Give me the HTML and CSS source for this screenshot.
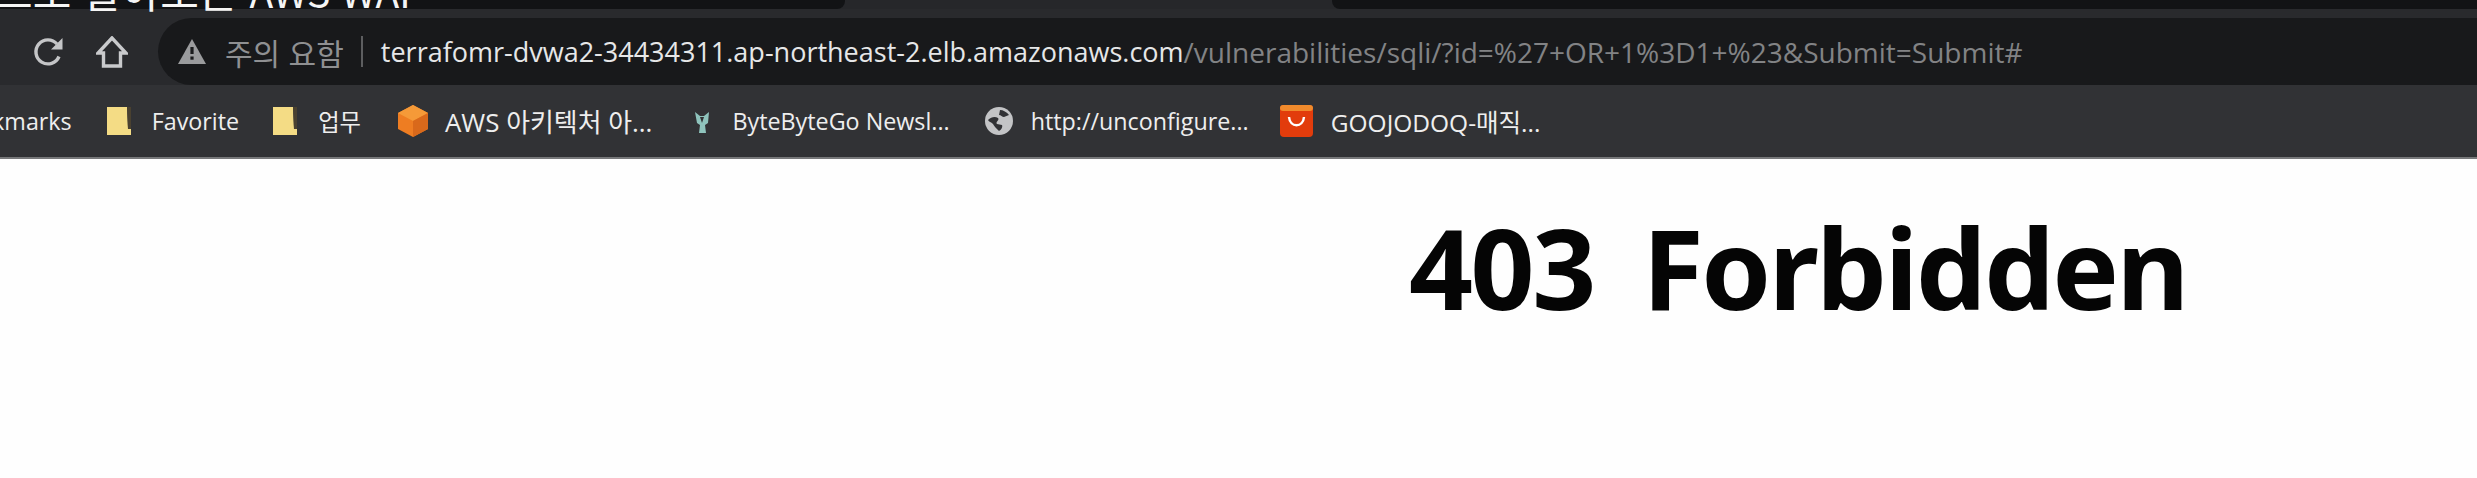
FILE: index.html
```html
<!DOCTYPE html>
<html lang="ko">
<head>
  <meta charset="UTF-8">
  <title>403 Forbidden</title>
  <link rel="stylesheet" href="styles.css">
</head>
<body>

  <!-- Video subtitle, cut off by the top edge -->
  <div class="subtitle">으로 알아보는 <span class="subtitle-latin">AWS WAF</span></div>

  <!-- Tab strip -->
  <div class="tabstrip">
    <div class="tab tab-left"></div>
    <div class="tab-gap"></div>
    <div class="tab tab-right"></div>
  </div>

  <!-- Toolbar -->
  <div class="toolbar">
    <svg class="tool-icon reload" viewBox="0 0 30 30" fill="none" stroke="#c4c5c7" stroke-width="3.4">
      <path d="M26 19.5a12 12 0 1 1-2-12.5"/>
      <path d="M29.5 1v11.500H18z" fill="#c4c5c7" stroke="none"/>
    </svg>
    <svg class="tool-icon home" viewBox="0 0 32 32" fill="none" stroke="#c9cacc" stroke-width="3.400">
      <path d="M16 2 2 17h5.500v13h17V17H30z"/>
    </svg>
    <div class="omnibox">
      <svg class="warn" viewBox="0 0 28 25">
        <path d="M14 0 28 25H0z" fill="#9a9b9d"/>
        <rect x="12.400" y="8" width="3.200" height="7" fill="#1a1b1d"/>
        <rect x="12.400" y="17.500" width="3.200" height="3.200" fill="#1a1b1d"/>
      </svg>
      <span class="warn-text">주의 요함</span>
      <span class="divider"></span>
      <span class="url-host">terrafomr-dvwa2-34434311.ap-northeast-2.elb.amazonaws.com</span><span class="url-path">/vulnerabilities/sqli/?id=%27+OR+1%3D1+%23&amp;Submit=Submit#</span>
    </div>
  </div>

  <!-- Bookmarks bar -->
  <div class="bookmarks">
    <span class="bm bm-clipped">Bookmarks</span>

    <div class="bm bm-favorite">
      <svg class="folder" viewBox="0 0 24 28">
        <path d="M0 0h20l1 22h3v6H0z" fill="#f4dc85"/>
        <path d="M20 0h4v22h-3z" fill="#4a4130"/>
      </svg>
      <span>Favorite</span>
    </div>

    <div class="bm bm-work">
      <svg class="folder" viewBox="0 0 24 28">
        <path d="M0 0h20l1 22h3v6H0z" fill="#f4dc85"/>
        <path d="M20 0h4v22h-3z" fill="#4a4130"/>
      </svg>
      <span>업무</span>
    </div>

    <div class="bm bm-aws">
      <svg class="favicon-aws" viewBox="0 0 30 32">
        <path d="M15 0 30 8v16l-15 8-15-8V8z" fill="#ee7d22"/>
        <path d="M15 0 30 8 15 16 0 8z" fill="#f59a38"/>
        <path d="M15 16 30 8v16l-15 8z" fill="#d9691b"/>
      </svg>
      <span class="label-aws">AWS 아키텍처 아...</span>
    </div>

    <div class="bm bm-bytebyte">
      <svg class="favicon-byte" viewBox="0 0 14 24">
        <path d="M0 3 5 7h4l5-4-1 11-3 2 1 8H4l1-8-3-2z" fill="#8fc4bd"/>
        <path d="M5 8h4L7 14z" fill="#313235"/>
      </svg>
      <span>ByteByteGo Newsl...</span>
    </div>

    <div class="bm bm-http">
      <svg class="favicon-globe" viewBox="0 0 28 28">
        <circle cx="14" cy="14" r="14" fill="#c3c4c6"/>
        <path d="M3 13c3-3 7-4 10-2 2 2-3 4-1 6l5 1c1 2-1 5-3 6-3-3-5-5-6-7-2-2-4-2-5-4zM15 3c3 0 7 2 9 5l-5 2c-2 0-3-2-5-2z" fill="#313235"/>
      </svg>
      <span>http://unconfigure...</span>
    </div>

    <div class="bm bm-goojo">
      <svg class="favicon-red" viewBox="0 0 33 32">
        <rect width="33" height="32" rx="4" fill="#e23c0c"/>
        <rect width="33" height="6" rx="3" fill="#f08a2c"/>
        <path d="M9 12c1 11 14 11 15 0" fill="none" stroke="#fff" stroke-width="2.500"/>
      </svg>
      <span class="label-goojo">GOOJODOQ-매직...</span>
    </div>
  </div>

  <!-- Page content -->
  <div class="content">
    <h1>403 Forbidden</h1>
  </div>

</body>
</html>
```

FILE: styles.css
```css
body {
  font-family: "Open Sans", "Noto Sans CJK KR", sans-serif;
  margin: 0;
  padding: 0;
  height: 478px;
  overflow: hidden;
  background-color: #fefefe;
}

.subtitle {
  position: absolute;
  top: -38px;
  left: -6px;
  font-family: "Noto Sans CJK KR", sans-serif;
  font-size: 42px;
  line-height: 56px;
  color: #f5f5f5;
  white-space: nowrap;
}
.subtitle-latin {
  font-size: 39px;
}

.tabstrip {
  display: flex;
  height: 9px;
  background-color: #26272a;
}
.tab {
  background-color: #121315;
}
.tab-left {
  width: 845px;
  border-bottom-right-radius: 8px;
}
.tab-gap {
  flex: 1;
}
.tab-right {
  width: 1145px;
  border-bottom-left-radius: 8px;
}

.toolbar {
  display: flex;
  align-items: center;
  height: 76px;
  background-color: #292a2d;
}
.tool-icon {
  flex-shrink: 0;
  margin-top: 10px;
}
.reload {
  width: 30px;
  height: 30px;
  margin-left: 33px;
}
.home {
  width: 32px;
  height: 32px;
  margin-left: 33px;
}

.omnibox {
  flex: 1;
  height: 67px;
  margin-left: 30px;
  margin-top: 9px;
  display: flex;
  align-items: center;
  background-color: #18191b;
  border-radius: 34px 0 0 34px;
  white-space: nowrap;
  font-size: 27px;
}
.warn {
  width: 28px;
  height: 25px;
  margin-left: 20px;
}
.warn-text {
  margin-left: 19px;
  font-family: "Noto Sans CJK KR", sans-serif;
  font-size: 30px;
  color: #8f9092;
}
.divider {
  width: 2px;
  height: 31px;
  margin-left: 17px;
  background-color: #5d5e60;
}
.url-host {
  margin-left: 18px;
  color: #e6e7e8;
}
.url-path {
  font-size: 28px;
  color: #828385;
}

.bookmarks {
  display: flex;
  align-items: center;
  height: 74px;
  overflow: hidden;
  box-sizing: border-box;
  border-bottom: 2px solid #77787a;
  background-color: #313235;
  color: #eeeeee;
  font-size: 23.3px;
  white-space: nowrap;
}
.bm {
  display: flex;
  align-items: center;
  flex-shrink: 0;
}
.bm-clipped {
  margin-left: -51px;
}
.bm-favorite {
  margin-left: 35px;
}
.bm-work {
  margin-left: 34px;
}
.bm-aws {
  margin-left: 37px;
}
.bm-bytebyte {
  margin-left: 43px;
}
.bm-http {
  margin-left: 35px;
}
.bm-goojo {
  margin-left: 31px;
}
.label-aws {
  font-size: 25.9px;
}
.label-goojo {
  font-size: 24.5px;
}

.folder {
  width: 24px;
  height: 28px;
  margin-right: 21px;
}
.favicon-aws {
  width: 30px;
  height: 32px;
  margin-right: 17px;
}
.favicon-byte {
  width: 14px;
  height: 24px;
  margin-right: 23px;
}
.favicon-globe {
  width: 28px;
  height: 28px;
  margin-right: 18px;
}
.favicon-red {
  width: 33px;
  height: 32px;
  margin-right: 18px;
}

.content {
  padding-left: 1409px;
}
h1 {
  margin: 38px 0 0;
  font-family: "Noto Sans", sans-serif;
  font-size: 112px;
  line-height: 140px;
  font-weight: 700;
  letter-spacing: -2.5px;
  word-spacing: 22px;
  color: #050505;
  white-space: nowrap;
}
```
